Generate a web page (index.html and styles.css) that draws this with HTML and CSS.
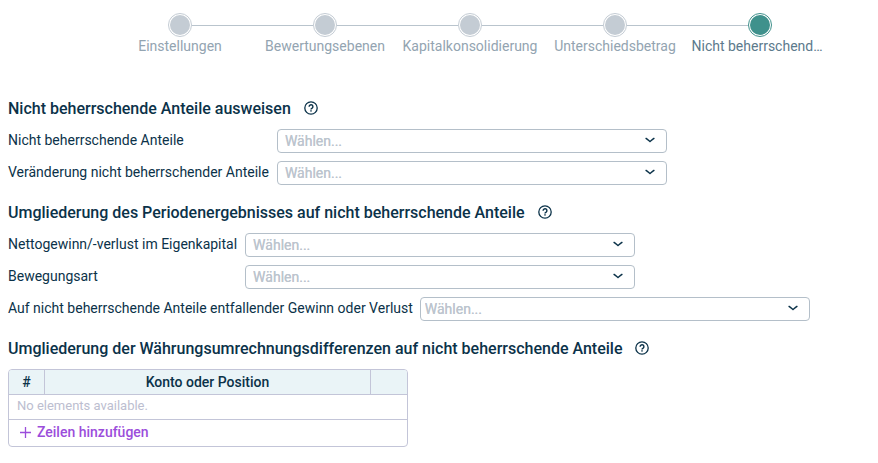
FILE: index.html
```html
<!DOCTYPE html>
<html lang="de">
<head>
<meta charset="utf-8">
<title>Nicht beherrschende Anteile</title>
<link rel="stylesheet" href="styles.css">
</head>
<body>
<svg class="sprite" aria-hidden="true">
  <symbol id="help" viewBox="0 0 14 14">
    <circle cx="7" cy="7" r="6.2" fill="none" stroke="currentColor" stroke-width="1.3"/>
    <path d="M5.1 5.7a1.9 1.9 0 1 1 3 1.5c-.7.5-1.1.7-1.1 1.3" fill="none" stroke="currentColor" stroke-width="1.4"/>
    <rect x="6.3" y="9.2" width="1.4" height="1.4" fill="currentColor"/>
  </symbol>
  <symbol id="chevron" viewBox="0 0 10 6">
    <path d="M.6 1.2C2.2 2.2 3.6 3.4 5 4.5 6.4 3.4 7.8 2.2 9.4 1.2" fill="none" stroke="currentColor" stroke-width="1.5"/>
  </symbol>
</svg>

<ol class="steps">
  <li class="step"><span class="dot"></span><span class="step-label">Einstellungen</span></li>
  <li class="step"><span class="dot"></span><span class="step-label">Bewertungsebenen</span></li>
  <li class="step"><span class="dot"></span><span class="step-label">Kapitalkonsolidierung</span></li>
  <li class="step"><span class="dot"></span><span class="step-label">Unterschiedsbetrag</span></li>
  <li class="step current" aria-current="step"><span class="dot"></span><span class="step-label">Nicht beherrschend…</span></li>
</ol>

<main>
  <section>
    <h2>Nicht beherrschende Anteile ausweisen <button class="help" type="button" aria-label="Hilfe"><svg><use href="#help"/></svg></button></h2>
    <div class="fields">
      <label for="nci">Nicht beherrschende Anteile</label>
      <div class="picker"><select id="nci"><option>Wählen...</option></select><svg><use href="#chevron"/></svg></div>
      <label for="nci-change">Veränderung nicht beherrschender Anteile</label>
      <div class="picker"><select id="nci-change"><option>Wählen...</option></select><svg><use href="#chevron"/></svg></div>
    </div>
  </section>

  <section>
    <h2>Umgliederung des Periodenergebnisses auf nicht beherrschende Anteile <button class="help" type="button" aria-label="Hilfe"><svg><use href="#help"/></svg></button></h2>
    <div class="fields">
      <label for="equity">Nettogewinn/-verlust im Eigenkapital</label>
      <div class="picker"><select id="equity"><option>Wählen...</option></select><svg><use href="#chevron"/></svg></div>
      <label for="movement">Bewegungsart</label>
      <div class="picker"><select id="movement"><option>Wählen...</option></select><svg><use href="#chevron"/></svg></div>
    </div>
    <div class="fields compact">
      <label for="result">Auf nicht beherrschende Anteile entfallender Gewinn oder Verlust</label>
      <div class="picker"><select id="result"><option>Wählen...</option></select><svg><use href="#chevron"/></svg></div>
    </div>
  </section>

  <section>
    <h2>Umgliederung der Währungsumrechnungsdifferenzen auf nicht beherrschende Anteile <button class="help" type="button" aria-label="Hilfe"><svg><use href="#help"/></svg></button></h2>
    <table>
      <colgroup><col class="col-number"><col><col class="col-action"></colgroup>
      <thead>
        <tr><th scope="col">#</th><th scope="col">Konto oder Position</th><td></td></tr>
      </thead>
      <tbody>
        <tr><td class="empty" colspan="3">No elements available.</td></tr>
      </tbody>
      <tfoot>
        <tr><td colspan="3"><button class="add" type="button"><svg viewBox="0 0 11 11"><path d="M5.5 0v11M0 5.5h11" fill="none" stroke="currentColor" stroke-width="1.3"/></svg>Zeilen hinzufügen</button></td></tr>
      </tfoot>
    </table>
  </section>
</main>
</body>
</html>
```
FILE: styles.css
```css
* {
  box-sizing: border-box;
}

body {
  margin: 0;
  padding: 13px 8px 16px;
  background: #fff;
  color: #0b3249;
  font: 14px/22px Roboto, "Liberation Sans", sans-serif;
}

svg {
  display: block;
}

.sprite {
  display: none;
}

button {
  padding: 0;
  border: 0;
  background: none;
  color: inherit;
  font: inherit;
}

/* Progress steps */

.steps {
  display: flex;
  justify-content: center;
  margin: 0 0 41px;
  padding: 0 0 0 62px;
  list-style: none;
  color: #93a4b1;
}

.step {
  display: grid;
  grid-template-columns: 1fr 24px 1fr;
  align-items: center;
  width: 145px;
}

.step::before,
.step::after {
  content: "";
  grid-row: 1;
  height: 1px;
  background: #b9c4cd;
}

.step::before {
  grid-column: 1;
}

.step::after {
  grid-column: 3;
}

.step:first-child::before,
.step:last-child::after {
  background: none;
}

.dot {
  grid-area: 1 / 2;
  height: 24px;
  padding: 1px;
  border: 1px solid #c4ccd4;
  border-radius: 50%;
  background: #c4ccd4 content-box;
}

.step-label {
  grid-area: 2 / 1 / 3 / 4;
  padding: 0 4px;
  line-height: 18px;
  text-align: center;
  white-space: nowrap;
}

.current {
  color: #5c7a8c;
}

.current .step-label {
  text-align: left;
}

.current .dot {
  border-color: #3f918c;
  background-color: #3f918c;
}

/* Sections */

section {
  margin-bottom: 15px;
}

h2 {
  display: flex;
  align-items: center;
  gap: 13px;
  margin: 0 0 7px;
  font-size: 16px;
  font-weight: 500;
  line-height: 26px;
}

.help svg {
  width: 14px;
  height: 14px;
  margin-bottom: 2px;
}

.fields {
  display: grid;
  grid-template-columns: max-content minmax(0, 390px);
  gap: 8px;
}

.fields + .fields {
  margin-top: 8px;
}

.picker {
  display: grid;
  align-items: center;
}

.picker select,
.picker svg {
  grid-area: 1 / 1;
}

.picker svg {
  justify-self: end;
  width: 10px;
  height: 6px;
  margin: 0 12px 2px 0;
  pointer-events: none;
}

select {
  appearance: none;
  width: 100%;
  height: 24px;
  margin: 0;
  padding: 0 28px 0 7px;
  border: 1px solid #b4bfc9;
  border-radius: 4px;
  background: #fff;
  color: #bcc5ce;
  font: 14px/22px Roboto, "Liberation Sans", sans-serif;
  text-shadow: 0 0 0 #bcc5ce;
}

.compact {
  column-gap: 7px;
}

.compact select {
  padding-left: 4px;
}

/* Accounts table */

table {
  width: 400px;
  max-width: 100%;
  border: 1px solid #c3c5d8;
  border-radius: 4px;
  border-collapse: separate;
  border-spacing: 0;
  table-layout: fixed;
  overflow: hidden;
}

.col-number,
.col-action {
  width: 36px;
}

th,
td {
  height: 25px;
  padding: 0;
  border-bottom: 1px solid #c3c5d8;
}

thead {
  background: #eaf4f7;
}

th {
  border-right: 1px solid #c3c5d8;
  font-weight: 500;
}

td.empty {
  padding: 0 8px 2px;
  color: #bcbed0;
  font-size: 13px;
}

tfoot td {
  height: 26px;
  padding: 0 11px 2px;
  border-bottom: 0;
}

.add {
  display: flex;
  align-items: center;
  gap: 6px;
  color: #9b4ddb;
  font-weight: 500;
}

.add svg {
  width: 11px;
  height: 11px;
}
```
